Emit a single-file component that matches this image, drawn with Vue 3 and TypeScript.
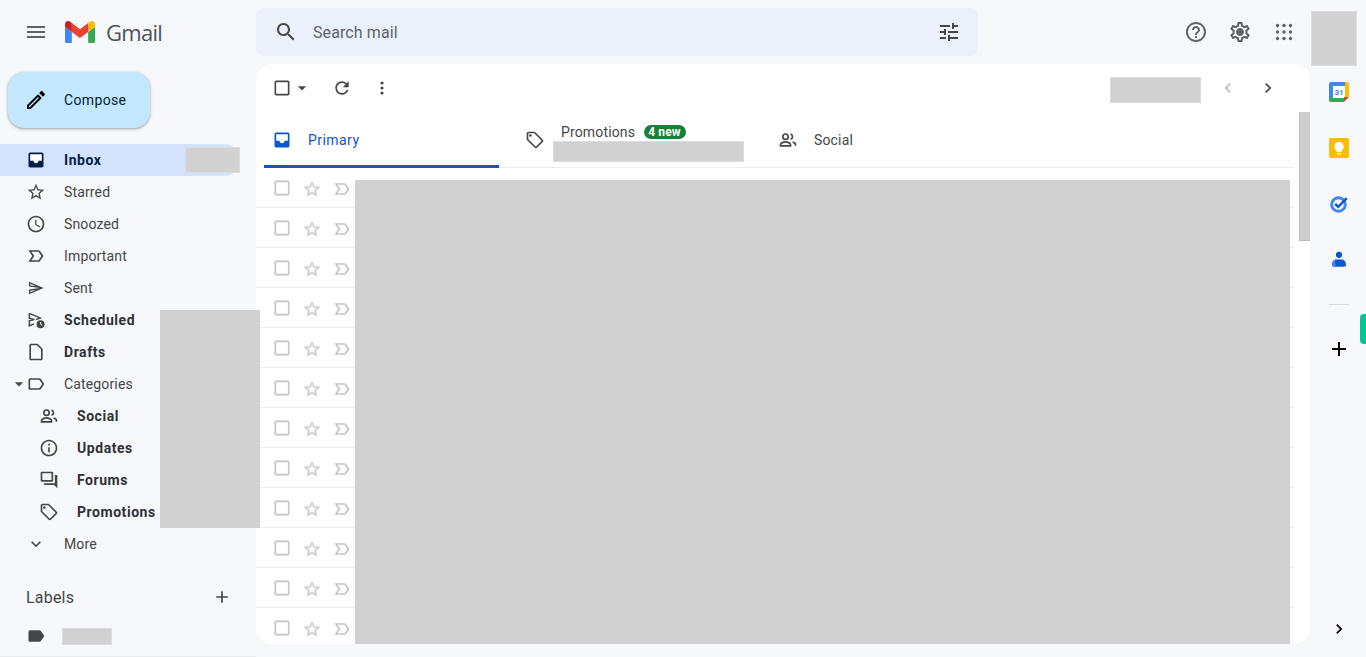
<template>
  <div class="gmail">
    <header class="topbar">
      <div class="brand">
        <svg class="icon menu" viewBox="0 0 24 24"><path :d="icons.menu" /></svg>
        <svg class="logo" viewBox="52 42 88 66">
          <path fill="#4285f4" d="M58 108h14V74L52 59v43c0 3.32 2.69 6 6 6" />
          <path fill="#34a853" d="M120 108h14c3.32 0 6-2.69 6-6V59l-20 15" />
          <path fill="#fbbc04" d="M120 48v26l20-15v-8c0-7.42-8.47-11.65-14.4-7.2" />
          <path fill="#ea4335" d="M72 74V48l24 18 24-18v26L96 92" />
          <path fill="#c5221f" d="M52 51v8l20 15V48l-5.6-4.2c-5.94-4.45-14.4-.22-14.4 7.2" />
        </svg>
        <span class="wordmark">Gmail</span>
      </div>
      <div class="search">
        <svg class="icon" viewBox="0 0 24 24"><path :d="icons.search" /></svg>
        <span class="search-text">Search mail</span>
        <svg class="icon tune" viewBox="0 0 24 24"><path :d="icons.tune" /></svg>
      </div>
      <div class="top-actions">
        <svg class="icon" viewBox="0 0 24 24"><path :d="icons.help" /></svg>
        <svg class="icon" viewBox="0 0 24 24"><path :d="icons.settings" /><circle cx="12" cy="12" r="2.2" /></svg>
        <svg class="icon" viewBox="0 0 24 24">
          <circle v-for="d in appDots" :key="d.k" :cx="d.x" :cy="d.y" r="1.7" />
        </svg>
      </div>
      <div class="avatar redact"></div>
    </header>

    <div class="body">
      <aside class="sidebar">
        <button class="compose">
          <svg class="icon" viewBox="0 0 24 24"><path :d="icons.pencil" /></svg>
          <span>Compose</span>
        </button>

        <nav class="nav">
          <div
            v-for="item in navItems"
            :key="item.label"
            class="nav-item"
            :class="{ active: item.active, bold: item.bold, sub: item.sub }"
          >
            <svg v-if="item.caret" class="caret" viewBox="0 0 24 24"><path :d="icons.caret" /></svg>
            <svg v-if="item.svg" class="icon nav-icon" viewBox="0 0 24 24" v-html="item.svg"></svg>
            <svg v-else class="icon nav-icon" viewBox="0 0 24 24"><path :d="icons[item.icon]" /></svg>
            <span>{{ item.label }}</span>
            <div v-if="item.active" class="inbox-count redact"></div>
          </div>
          <div class="nav-cover redact"></div>
        </nav>

        <div class="labels-head">
          <span>Labels</span>
          <svg class="icon" viewBox="0 0 24 24"><path :d="icons.plus" /></svg>
        </div>
        <div class="label-row">
          <svg class="icon" viewBox="0 0 24 24"><path :d="icons.labelFilled" /></svg>
          <div class="label-name redact"></div>
        </div>
      </aside>

      <main class="mail">
        <div class="toolbar">
          <svg class="icon check" viewBox="0 0 24 24"><path :d="icons.checkbox" /></svg>
          <svg class="icon caret-sm" viewBox="0 0 24 24"><path :d="icons.caret" /></svg>
          <svg class="icon refresh" viewBox="0 0 24 24"><path :d="icons.refresh" /></svg>
          <svg class="icon dots" viewBox="0 0 24 24">
            <circle cx="12" cy="6" r="1.9" /><circle cx="12" cy="12" r="1.9" /><circle cx="12" cy="18" r="1.9" />
          </svg>
          <div class="pager redact"></div>
          <svg class="icon prev" viewBox="0 0 24 24"><path :d="icons.chevronLeft" /></svg>
          <svg class="icon next" viewBox="0 0 24 24"><path :d="icons.chevronRight" /></svg>
        </div>

        <div class="tabs">
          <div class="tab primary">
            <svg class="icon" viewBox="0 0 24 24"><path :d="icons.inbox" /></svg>
            <span>Primary</span>
          </div>
          <div class="tab promos">
            <svg class="icon" viewBox="0 0 24 24"><path :d="icons.tag" /><circle cx="6.5" cy="6.5" r="1.5" /></svg>
            <div class="promo-text">
              <div class="promo-line">
                <span>Promotions</span>
                <span class="badge">4 new</span>
              </div>
              <div class="promo-snippet redact"></div>
            </div>
          </div>
          <div class="tab social">
            <svg class="icon" viewBox="0 0 24 24" v-html="peopleSvg"></svg>
            <span>Social</span>
          </div>
        </div>

        <div class="rows">
          <div v-for="n in 12" :key="n" class="row">
            <svg class="icon" viewBox="0 0 24 24"><path :d="icons.checkbox" /></svg>
            <svg class="icon low" viewBox="0 0 24 24"><path :d="icons.star" /></svg>
            <svg class="icon low" viewBox="0 0 24 24"><path :d="icons.important" /></svg>
          </div>
          <div class="rows-cover redact"></div>
        </div>
        <div class="scroll-thumb"></div>
      </main>

      <aside class="rail">
        <svg class="app" viewBox="0 0 20 20">
          <rect width="20" height="20" rx="2" fill="#fff" />
          <path fill="#4285f4" d="M2 0h14v4H4v12H0V2a2 2 0 012-2z" />
          <path fill="#fbbc04" d="M16 0h2a2 2 0 012 2v13h-4z" />
          <path fill="#34a853" d="M0 16h15v4H2a2 2 0 01-2-2z" />
          <path fill="#ea4335" d="M15 20v-5h5z" />
          <path fill="#188038" d="M15 16h1v-1h-1z" />
          <text x="10" y="13.4" class="cal-text">31</text>
        </svg>
        <svg class="app" viewBox="0 0 20 20">
          <rect width="20" height="20" rx="2" fill="#fbbc04" />
          <path fill="#fff" d="M10 4a4.6 4.6 0 00-2.6 8.4V14h5.2v-1.6A4.6 4.6 0 0010 4zM8 15h4v1.2H8z" />
        </svg>
        <svg class="app" viewBox="0 0 20 20">
          <circle cx="9.5" cy="10.5" r="6.8" fill="none" stroke="#4285f4" stroke-width="3" />
          <path d="M6.2 10l3 2.8 8.6-8.6" fill="none" stroke="#0b57d0" stroke-width="2.4" />
        </svg>
        <svg class="app" viewBox="0 0 20 20">
          <circle cx="10" cy="4.8" r="3.1" fill="#0b57d0" />
          <path fill="#0b57d0" d="M7 9.5h6c2.2 0 4 2.4 4 5.3 0 1.3-.8 2-2 2H5c-1.2 0-2-.7-2-2 0-2.9 1.8-5.3 4-5.3z" />
          <path fill="#4285f4" d="M7 9.5c-2.2 0-4 2.4-4 5.3 0 1.3.8 2 2 2h2.5a7 7 0 01-.5-7.3z" />
        </svg>
        <div class="rail-divider"></div>
        <svg class="icon rail-plus" viewBox="0 0 24 24"><path :d="icons.plus" /></svg>
        <div class="rail-tab"></div>
        <svg class="icon rail-toggle" viewBox="0 0 24 24"><path :d="icons.chevronRight" /></svg>
      </aside>
    </div>
  </div>
</template>

<script setup lang="ts">
const icons: Record<string, string> = {
  menu: 'M3 18h18v-2H3v2zm0-5h18v-2H3v2zm0-7v2h18V6H3z',
  search:
    'M15.5 14h-.79l-.28-.27C15.41 12.59 16 11.11 16 9.5 16 5.91 13.09 3 9.5 3S3 5.91 3 9.5 5.91 16 9.5 16c1.61 0 3.09-.59 4.23-1.57l.27.28v.79l5 4.99L20.49 19l-4.99-5zm-6 0C7.01 14 5 11.99 5 9.5S7.01 5 9.5 5 14 7.01 14 9.5 11.99 14 9.5 14z',
  tune: 'M3 17v2h6v-2H3zM3 5v2h10V5H3zm10 16v-2h8v-2h-8v-2h-2v6h2zM7 9v2H3v2h4v2h2V9H7zm14 4v-2H11v2h10zm-6-4h2V7h4V5h-4V3h-2v6z',
  help: 'M11 18h2v-2h-2v2zm1-16C6.48 2 2 6.48 2 12s4.48 10 10 10 10-4.48 10-10S17.52 2 12 2zm0 18c-4.41 0-8-3.59-8-8s3.59-8 8-8 8 3.59 8 8-3.59 8-8 8zm0-14c-2.21 0-4 1.79-4 4h2c0-1.1.9-2 2-2s2 .9 2 2c0 2-3 1.75-3 5h2c0-2.25 3-2.5 3-5 0-2.21-1.79-4-4-4z',
  settings:
    'M19.43 12.98c.04-.32.07-.64.07-.98 0-.34-.03-.66-.07-.98l2.11-1.65c.19-.15.24-.42.12-.64l-2-3.46c-.09-.16-.26-.25-.44-.25-.06 0-.12.01-.17.03l-2.49 1c-.52-.4-1.08-.73-1.69-.98l-.38-2.65C14.46 2.18 14.25 2 14 2h-4c-.25 0-.46.18-.49.42l-.38 2.65c-.61.25-1.17.59-1.69.98l-2.49-1c-.06-.02-.12-.03-.18-.03-.17 0-.34.09-.43.25l-2 3.46c-.13.22-.07.49.12.64l2.11 1.65c-.04.32-.07.65-.07.98 0 .33.03.66.07.98l-2.11 1.65c-.19.15-.24.42-.12.64l2 3.46c.09.16.26.25.44.25.06 0 .12-.01.17-.03l2.49-1c.52.4 1.08.73 1.69.98l.38 2.65c.03.24.24.42.49.42h4c.25 0 .46-.18.49-.42l.38-2.65c.61-.25 1.17-.59 1.69-.98l2.49 1c.06.02.12.03.18.03.17 0 .34-.09.43-.25l2-3.46c.12-.22.07-.49-.12-.64l-2.11-1.65zm-1.98-1.71c.04.31.05.52.05.73 0 .21-.02.43-.05.73l-.14 1.13.89.7 1.08.84-.7 1.21-1.27-.51-1.04-.42-.9.68c-.43.32-.84.56-1.25.73l-1.06.43-.16 1.13-.2 1.35h-1.4l-.19-1.35-.16-1.13-1.06-.43c-.43-.18-.83-.41-1.23-.71l-.91-.7-1.06.43-1.27.51-.7-1.21 1.08-.84.89-.7-.14-1.13c-.03-.31-.05-.54-.05-.74s.02-.43.05-.73l.14-1.13-.89-.7-1.08-.84.7-1.21 1.27.51 1.04.42.9-.68c.43-.32.84-.56 1.25-.73l1.06-.43.16-1.13.2-1.35h1.39l.19 1.35.16 1.13 1.06.43c.43.18.83.41 1.23.71l.91.7 1.06-.43 1.27-.51.7 1.21-1.07.85-.89.7.14 1.13zM12 8c-2.21 0-4 1.79-4 4s1.79 4 4 4 4-1.79 4-4-1.79-4-4-4zm0 6c-1.1 0-2-.9-2-2s.9-2 2-2 2 .9 2 2-.9 2-2 2z',
  pencil:
    'M3 17.25V21h3.75L17.81 9.94l-3.75-3.75L3 17.25zM5.92 19H5v-.92l9.06-9.06.92.92L5.92 19zM20.71 5.63l-2.34-2.34c-.2-.2-.45-.29-.71-.29s-.51.1-.7.29l-1.83 1.83 3.75 3.75 1.83-1.83c.39-.39.39-1.02 0-1.41z',
  inbox:
    'M19 3H5c-1.1 0-2 .9-2 2v14c0 1.1.9 2 2 2h14c1.1 0 2-.9 2-2V5c0-1.1-.9-2-2-2zm0 10h-4c0 1.66-1.35 3-3 3s-3-1.34-3-3H5V5h14v8z',
  star: 'M22 9.24l-7.19-.62L12 2 9.19 8.63 2 9.24l5.46 4.73L5.82 21 12 17.27 18.18 21l-1.63-7.03L22 9.24zM12 15.4l-3.76 2.27 1-4.28-3.32-2.88 4.38-.38L12 6.1l1.71 4.04 4.38.38-3.32 2.88 1 4.28L12 15.4z',
  clock:
    'M11.99 2C6.47 2 2 6.48 2 12s4.47 10 9.99 10C17.52 22 22 17.52 22 12S17.52 2 11.99 2zM12 20c-4.42 0-8-3.58-8-8s3.58-8 8-8 8 3.58 8 8-3.58 8-8 8zm.5-13H11v6l5.25 3.15.75-1.23-4.5-2.67z',
  important:
    'M15 19H3l4.5-7L3 5h12c.65 0 1.26.31 1.63.84L21 12l-4.37 6.16c-.37.52-.98.84-1.63.84zm-8.5-2H15l3.5-5L15 7H6.5l3.5 5-3.5 5z',
  sent: 'M4.01 6.03l7.51 3.22-7.52-1 .01-2.22m7.5 8.72L4 17.97v-2.22l7.51-1M2.01 3L2 10l15 2-15 2 .01 7L23 12 2.01 3z',
  draft: 'M14 2H6c-1.1 0-2 .9-2 2v16c0 1.1.9 2 2 2h12c1.1 0 2-.9 2-2V8l-6-6zm4 18H6V4h7.17L18 8.83V20z',
  label:
    'M17.63 5.84C17.27 5.33 16.67 5 16 5L5 5.01C3.9 5.01 3 5.9 3 7v10c0 1.1.9 1.99 2 1.99L16 19c.67 0 1.27-.33 1.63-.84L22 12l-4.37-6.16zM16 17H5V7h11l3.55 5L16 17z',
  labelFilled:
    'M17.63 5.84C17.27 5.33 16.67 5 16 5L5 5.01C3.9 5.01 3 5.9 3 7v10c0 1.1.9 1.99 2 1.99L16 19c.67 0 1.27-.33 1.63-.84L22 12l-4.37-6.16z',
  info: 'M11 7h2v2h-2zm0 4h2v6h-2zm1-9C6.48 2 2 6.48 2 12s4.48 10 10 10 10-4.48 10-10S17.52 2 12 2zm0 18c-4.41 0-8-3.59-8-8s3.59-8 8-8 8 3.59 8 8-3.59 8-8 8z',
  forum: 'M3 2h13c.55 0 1 .45 1 1v10c0 .55-.45 1-1 1H3c-.55 0-1-.45-1-1V3c0-.55.45-1 1-1zm1 2v8h11V4H4zm15 2h2c.55 0 1 .45 1 1v15l-4-4H7c-.55 0-1-.45-1-1v-1h13V6z',
  tag: 'M21.41 11.58l-9-9C12.05 2.22 11.55 2 11 2H4c-1.1 0-2 .9-2 2v7c0 .55.22 1.05.59 1.42l9 9c.36.36.86.58 1.41.58s1.05-.22 1.41-.59l7-7c.37-.36.59-.86.59-1.41s-.23-1.06-.59-1.42zM13 20.01L4 11V4h7v-.01l9 9-7 7.02z',
  expand: 'M16.59 8.59L12 13.17 7.41 8.59 6 10l6 6 6-6z',
  plus: 'M19 13h-6v6h-2v-6H5v-2h6V5h2v6h6v2z',
  caret: 'M7 10l5 5 5-5z',
  checkbox:
    'M19 5v14H5V5h14m0-2H5c-1.1 0-2 .9-2 2v14c0 1.1.9 2 2 2h14c1.1 0 2-.9 2-2V5c0-1.1-.9-2-2-2z',
  refresh:
    'M17.65 6.35C16.2 4.9 14.21 4 12 4c-4.42 0-7.99 3.58-7.99 8s3.57 8 7.99 8c3.73 0 6.84-2.55 7.73-6h-2.08c-.82 2.33-3.04 4-5.65 4-3.31 0-6-2.69-6-6s2.69-6 6-6c1.66 0 3.14.69 4.22 1.78L13 11h7V4l-2.35 2.35z',
  chevronLeft: 'M15.41 7.41L14 6l-6 6 6 6 1.41-1.41L10.83 12z',
  chevronRight: 'M10 6L8.59 7.41 13.17 12l-4.58 4.59L10 18l6-6z',
}

const peopleSvg =
  '<g fill="none" stroke="currentColor" stroke-width="2"><circle cx="9" cy="8" r="3.2"/><path d="M3 19v-1.5c0-2 4-3.2 6-3.2s6 1.2 6 3.2V19z"/><path d="M15 4.9a3.2 3.2 0 010 6.2M17.5 14.5c2 .5 3.5 1.5 3.5 3V19"/></g>'

const sentSvg = `<path transform="translate(12 12) scale(.84) translate(-12 -12)" d="${icons.sent}"/>`

const scheduledSvg =
  '<path d="M4 4l13 5.5-5 2M4 4v6l6 1.5-6 1.500v6l5.5-2.300" fill="none" stroke="currentColor" stroke-width="1.8"/><circle cx="17.5" cy="17" r="4.8"/><path d="M17.5 14.5V17l2 1.3" fill="none" stroke="#f6f8fc" stroke-width="1.2"/>'

const inboxSvg = `<path fill="#fff" d="M5 5h14v8h-4c0 1.66-1.35 3-3 3s-3-1.34-3-3H5z"/><path d="${icons.inbox}"/>`

interface NavItem {
  label: string
  icon: string
  svg?: string
  active?: boolean
  bold?: boolean
  sub?: boolean
  caret?: boolean
}

const navItems: NavItem[] = [
  { label: 'Inbox', icon: 'inbox', svg: inboxSvg, active: true, bold: true },
  { label: 'Starred', icon: 'star' },
  { label: 'Snoozed', icon: 'clock' },
  { label: 'Important', icon: 'important' },
  { label: 'Sent', icon: 'sent', svg: sentSvg },
  { label: 'Scheduled', icon: 'sent', svg: scheduledSvg, bold: true },
  { label: 'Drafts', icon: 'draft', bold: true },
  { label: 'Categories', icon: 'label', caret: true },
  { label: 'Social', icon: 'people', svg: peopleSvg, bold: true, sub: true },
  { label: 'Updates', icon: 'info', bold: true, sub: true },
  { label: 'Forums', icon: 'forum', bold: true, sub: true },
  {
    label: 'Promotions',
    icon: 'tag',
    svg: `<path d="${icons.tag}"/><circle cx="6.5" cy="6.5" r="1.5"/>`,
    bold: true,
    sub: true,
  },
  { label: 'More', icon: 'expand' },
]

const appDots = [5.5, 12, 18.5].flatMap((y) =>
  [5.5, 12, 18.5].map((x) => ({ k: `${x}-${y}`, x, y })),
)
</script>

<style scoped>
.gmail {
  width: 1366px;
  height: 657px;
  overflow: hidden;
  display: flex;
  flex-direction: column;
  background: #f6f8fc;
  font-family: Roboto, 'Liberation Sans', sans-serif;
  color: #444746;
  position: relative;
}

.icon {
  width: 20px;
  height: 20px;
  fill: currentColor;
  flex: none;
  display: block;
}

.redact {
  background: #d1d1d1;
  box-shadow: inset 0 0 0 1px #dcdcdc;
}

.topbar {
  height: 64px;
  flex: none;
  display: flex;
  align-items: center;
}

.brand {
  width: 256px;
  flex: none;
  display: flex;
  align-items: center;
  padding-left: 24px;
  box-sizing: border-box;
}

.menu {
  width: 24px;
  height: 24px;
  color: #5f6368;
}

.logo {
  width: 30px;
  height: 22.5px;
  margin-left: 17px;
}

.wordmark {
  font-family: 'Open Sans', sans-serif;
  font-size: 22px;
  color: #505357;
  margin-left: 11px;
  letter-spacing: -0.7px;
}

.search {
  width: 722px;
  height: 48px;
  flex: none;
  background: #eaf1fb;
  border-radius: 8px;
  display: flex;
  align-items: center;
  padding: 0 17px 0 18px;
  box-sizing: border-box;
  color: #444746;
}

.search .icon {
  width: 24px;
  height: 24px;
}

.search-text {
  margin-left: 15px;
  font-size: 16px;
  letter-spacing: 0.1px;
  color: #5f6368;
  flex: 1;
}

.top-actions {
  margin-left: auto;
  display: flex;
  gap: 20px;
  color: #5f6368;
  margin-right: 15px;
}

.top-actions .icon {
  width: 24px;
  height: 24px;
}

.avatar {
  width: 46px;
  height: 55px;
  align-self: flex-start;
  margin: 11px 9px 0 0;
  flex: none;
  position: relative;
}

.body {
  flex: 1;
  display: flex;
  min-height: 0;
}

.sidebar {
  width: 256px;
  flex: none;
  border-bottom: 1px solid #e8eaed;
  box-sizing: border-box;
}

.compose {
  margin: 8px 0 16px 8px;
  width: 142px;
  height: 56px;
  border: 0;
  border-radius: 16px;
  background: #c2e7ff;
  box-shadow: 0 1px 2px rgba(60, 64, 67, 0.3), 0 1px 3px 1px rgba(60, 64, 67, 0.15);
  display: flex;
  align-items: center;
  padding: 0 0 0 16px;
  font-family: inherit;
  font-size: 14px;
  font-weight: 400;
  letter-spacing: 0.35px;
  color: #001d35;
}

.compose .icon {
  width: 24px;
  height: 24px;
  color: #000;
  margin-right: 16px;
}

.nav {
  position: relative;
  z-index: 1;
}

.nav-item {
  height: 32px;
  width: 240px;
  display: flex;
  align-items: center;
  padding-left: 26px;
  box-sizing: border-box;
  font-size: 14px;
  letter-spacing: 0.15px;
  position: relative;
  color: #444746;
}

.nav-icon {
  margin-right: 18px;
  color: #444746;
}

.nav-item.bold {
  font-weight: 700;
  letter-spacing: 0.55px;
  color: #303134;
}

.nav-item.sub {
  padding-left: 39px;
}

.nav-item.active {
  background: #d3e3fd;
  border-radius: 0 16px 16px 0;
  color: #041e49;
}

.nav-item.active .nav-icon {
  color: #041e49;
}

.inbox-count {
  width: 55px;
  height: 26px;
  margin-left: auto;
}

.caret {
  width: 20px;
  height: 20px;
  fill: currentColor;
  position: absolute;
  left: 9px;
  top: 6px;
}

.nav-cover {
  position: absolute;
  left: 160px;
  top: 166px;
  width: 100px;
  height: 218px;
  box-shadow: none;
}

.labels-head {
  display: flex;
  align-items: center;
  justify-content: space-between;
  margin-top: 25px;
  padding: 0 24px 0 26px;
  font-size: 16px;
  letter-spacing: 0.2px;
  height: 24px;
  width: 256px;
  box-sizing: border-box;
}

.label-row {
  display: flex;
  align-items: center;
  padding-left: 26px;
  margin-top: 17px;
}

.label-name {
  width: 50px;
  height: 17px;
  margin-left: 16px;
}

.mail {
  width: 1054px;
  height: 580px;
  flex: none;
  background: #fff;
  border-radius: 16px;
  overflow: hidden;
  position: relative;
}

.toolbar {
  height: 48px;
  display: flex;
  align-items: center;
  color: #444746;
}

.check {
  margin-left: 16px;
}

.refresh {
  margin-left: 20px;
}

.dots {
  margin-left: 20px;
}

.pager {
  width: 91px;
  height: 26px;
  margin-left: 718px;
  margin-top: 4px;
}

.prev {
  margin-left: 17px;
  color: #bdbdbd;
}

.next {
  margin-left: 20px;
}

.tabs {
  height: 56px;
  display: flex;
  margin: 0 16px 0 8px;
  box-sizing: border-box;
  border-bottom: 1px solid #eceff1;
}

.tab {
  height: 56px;
  width: 235px;
  box-sizing: border-box;
  display: flex;
  align-items: center;
  font-size: 14px;
  letter-spacing: 0.15px;
  flex: none;
}

.tab.primary {
  padding: 3px 0 0 8px;
  border-bottom: 3px solid #0b57d0;
  color: #0b57d0;
  letter-spacing: 0.45px;
}

.tab.primary .icon,
.tab.social .icon {
  margin-right: 16px;
}

.tab.promos {
  padding-left: 26px;
  width: 279px;
}

.promo-text {
  margin-left: 8px;
  margin-top: 5px;
}

.promo-line {
  display: flex;
  align-items: center;
  padding-left: 8px;
  height: 17px;
}

.badge {
  margin-left: 9px;
  background: #188038;
  color: #fff;
  font-size: 12px;
  font-weight: 700;
  height: 14px;
  line-height: 14px;
  padding: 0 5px 0 4px;
  border-radius: 7px;
}

.promo-snippet {
  width: 191px;
  height: 21px;
  margin-top: 1px;
}

.rows {
  position: relative;
}

.row {
  height: 40px;
  margin-right: 16px;
  box-sizing: border-box;
  border-bottom: 1px solid #eceff1;
  display: flex;
  align-items: center;
  padding-left: 16px;
  gap: 10px;
  color: #c4c7c5;
}

.row .low {
  transform: translateY(1px);
}

.rows-cover {
  position: absolute;
  left: 99px;
  top: 12px;
  width: 935px;
  height: 480px;
  box-shadow: none;
}

.scroll-thumb {
  position: absolute;
  right: 0;
  top: 48px;
  width: 11px;
  height: 129px;
  background: #cdcdcd;
  border-left: 1px solid #bdbdbd;
  border-bottom: 1px solid #bdbdbd;
  box-sizing: border-box;
}

.rail {
  width: 56px;
  flex: none;
  position: relative;
  display: flex;
  flex-direction: column;
  align-items: center;
  padding-left: 2px;
  box-sizing: border-box;
}

.app {
  width: 20px;
  height: 20px;
  display: block;
  margin-top: 18px;
  margin-bottom: 18px;
}

.cal-text {
  font-family: Roboto, sans-serif;
  font-size: 8px;
  font-weight: 700;
  fill: #4285f4;
  text-anchor: middle;
}

.rail-divider {
  width: 20px;
  height: 1px;
  background: #dadce0;
  margin-top: 16px;
}

.rail-plus {
  width: 24px;
  height: 24px;
  color: #000;
  margin-top: 32px;
}

.rail-tab {
  position: absolute;
  right: 0;
  top: 250px;
  width: 6px;
  height: 30px;
  background: #00c795;
  border-radius: 4px 0 0 4px;
}

.rail-toggle {
  margin-top: auto;
  margin-bottom: 18px;
  color: #000;
}
</style>

<style>
html,
body {
  margin: 0;
  background: #f6f8fc;
}
</style>
